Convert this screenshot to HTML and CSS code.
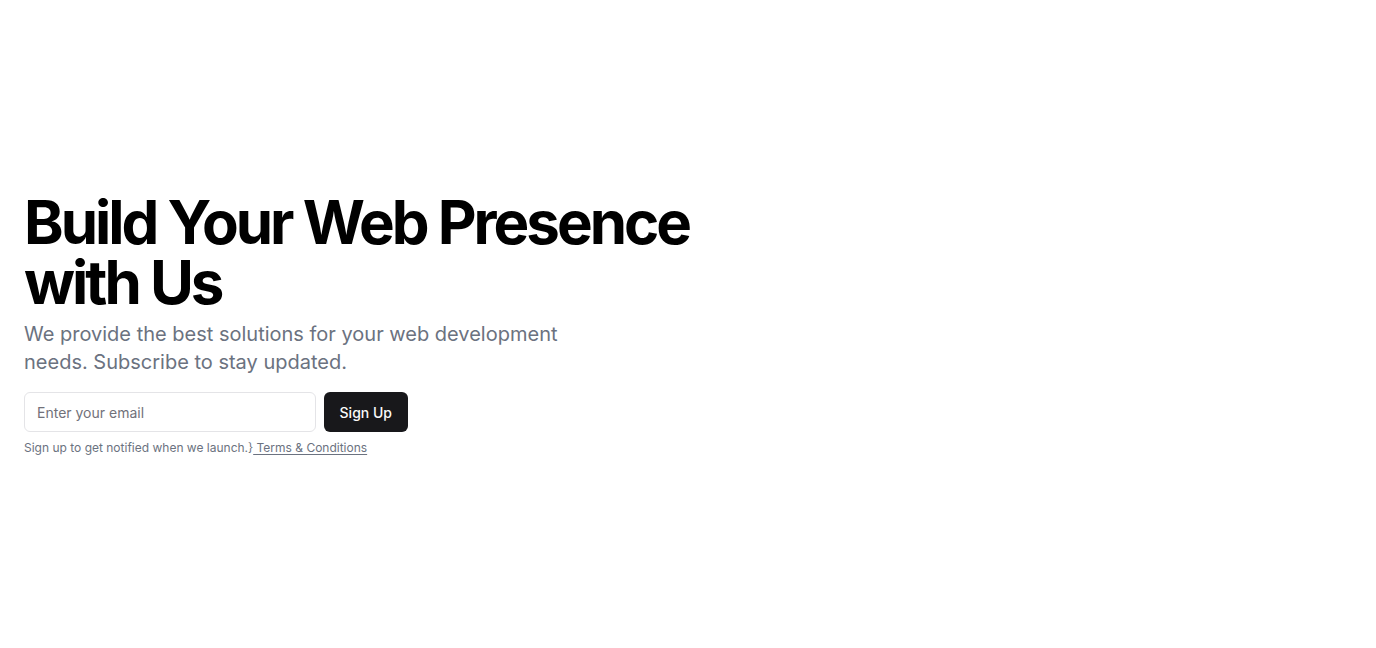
FILE: index.html
```html
<!DOCTYPE html>
<html lang="en">
<head>
<meta charset="utf-8">
<title>Build Your Web Presence</title>
<link rel="stylesheet" href="styles.css">
</head>
<body>
<section class="hero">
  <div class="container">
    <div class="stack">
      <div class="intro">
        <h1 class="title">Build Your Web Presence with Us</h1>
        <p class="lead">We provide the best solutions for your web development needs. Subscribe to stay updated.</p>
      </div>
      <div class="signup">
        <form class="form">
          <input class="input" type="email" placeholder="Enter your email">
          <button class="button" type="submit">Sign Up</button>
        </form>
        <p class="note">Sign up to get notified when we launch.}<a class="link" href="#"> Terms &amp; Conditions</a></p>
      </div>
    </div>
  </div>
</section>
</body>
</html>
```
FILE: styles.css
```css
* { box-sizing: border-box; }
html, body { margin: 0; padding: 0; background: #fff; }
body { font-family: Inter, "Noto Sans", sans-serif; color: #09090b; }
.hero { width: 100%; padding: 192px 0; }
.container { padding: 0 24px; }
.stack { display: flex; flex-direction: column; gap: 16px; }
.intro { display: flex; flex-direction: column; gap: 8px; }
.title {
  margin: 0;
  font-size: 60px;
  line-height: 1;
  font-weight: 700;
  letter-spacing: -0.05em;
  color: #000;
  max-width: 700px;
}
.lead {
  margin: 0;
  max-width: 600px;
  font-size: 20px;
  line-height: 28px;
  color: #6b7280;
}
.signup { width: 100%; max-width: 384px; display: flex; flex-direction: column; gap: 8px; }
.form { display: flex; gap: 8px; margin: 0; }
.input {
  flex: 1;
  height: 40px;
  border: 1px solid #e4e4e7;
  border-radius: 6px;
  padding: 8px 12px;
  font-family: inherit;
  font-size: 14px;
  color: #09090b;
  background: #fff;
  outline: none;
}
.input::placeholder { color: #71717a; }
.button {
  height: 40px;
  padding: 0 16px;
  border: none;
  border-radius: 6px;
  background: #18181b;
  color: #fafafa;
  font-family: inherit;
  font-size: 14px;
  font-weight: 500;
  cursor: pointer;
}
.note { margin: 0; font-size: 12px; line-height: 16px; color: #6b7280; }
.link { color: inherit; text-decoration: underline; text-underline-offset: 2px; }
```
